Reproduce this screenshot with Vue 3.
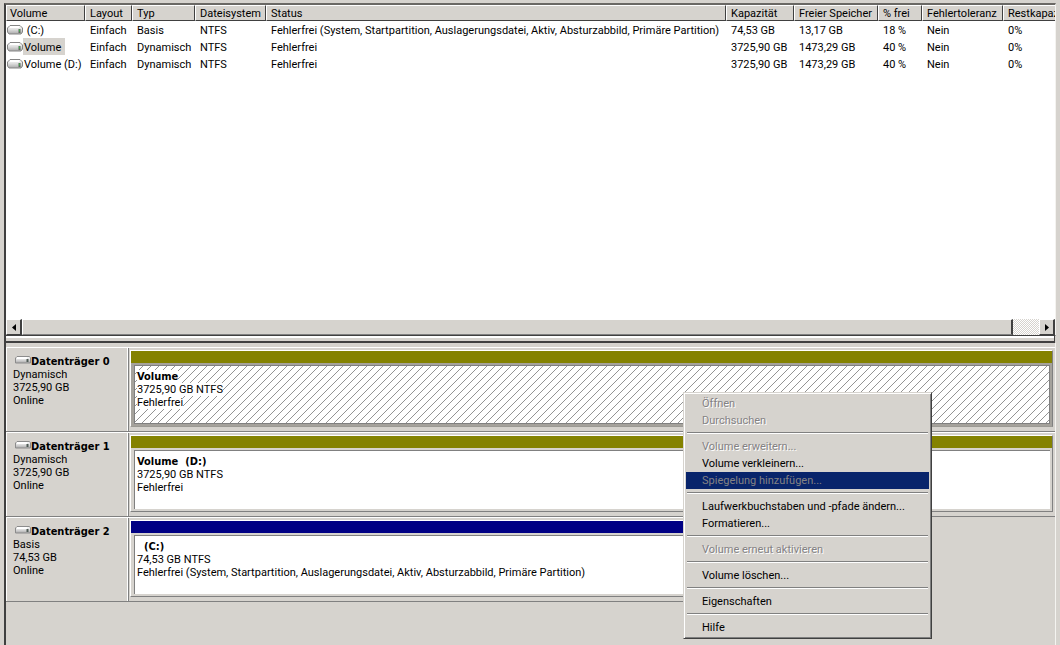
<script setup>
const columns = [
  { label: 'Volume', cls: 'c-volume' },
  { label: 'Layout', cls: 'c-layout' },
  { label: 'Typ', cls: 'c-type' },
  { label: 'Dateisystem', cls: 'c-fs' },
  { label: 'Status', cls: 'c-status' },
  { label: 'Kapazität', cls: 'c-capacity' },
  { label: 'Freier Speicher', cls: 'c-free' },
  { label: '% frei', cls: 'c-percent' },
  { label: 'Fehlertoleranz', cls: 'c-fault' },
  { label: 'Restkapaz', cls: 'c-overhead' },
]

const systemStatus =
  'Fehlerfrei (System, Startpartition, Auslagerungsdatei, Aktiv, Absturzabbild, Primäre Partition)'

const volumes = [
  { name: '\u00a0(C:)', cells: ['Einfach', 'Basis', 'NTFS', systemStatus, '74,53 GB', '13,17 GB', '18 %', 'Nein', '0%'] },
  { name: 'Volume', selected: true, cells: ['Einfach', 'Dynamisch', 'NTFS', 'Fehlerfrei', '3725,90 GB', '1473,29 GB', '40 %', 'Nein', '0%'] },
  { name: 'Volume (D:)', cells: ['Einfach', 'Dynamisch', 'NTFS', 'Fehlerfrei', '3725,90 GB', '1473,29 GB', '40 %', 'Nein', '0%'] },
]

const disks = [
  { name: 'Datenträger 0', kind: 'Dynamisch', size: '3725,90 GB', volume: 'Volume', info: '3725,90 GB NTFS', status: 'Fehlerfrei', band: 'olive', selected: true },
  { name: 'Datenträger 1', kind: 'Dynamisch', size: '3725,90 GB', volume: 'Volume\u00a0 (D:)', info: '3725,90 GB NTFS', status: 'Fehlerfrei', band: 'olive' },
  { name: 'Datenträger 2', kind: 'Basis', size: '74,53 GB', volume: '\u00a0 (C:)', info: '74,53 GB NTFS', status: systemStatus, band: 'navy', partial: true },
]

const menu = [
  [{ label: 'Öffnen', disabled: true }, { label: 'Durchsuchen', disabled: true }],
  [
    { label: 'Volume erweitern...', disabled: true },
    { label: 'Volume verkleinern...' },
    { label: 'Spiegelung hinzufügen...', disabled: true, active: true },
  ],
  [{ label: 'Laufwerkbuchstaben und -pfade ändern...' }, { label: 'Formatieren...' }],
  [{ label: 'Volume erneut aktivieren', disabled: true }],
  [{ label: 'Volume löschen...' }],
  [{ label: 'Eigenschaften' }],
  [{ label: 'Hilfe' }],
]
</script>

<template>
  <main class="console">
    <svg class="defs" width="0" height="0" aria-hidden="true">
      <defs>
        <linearGradient id="drive-body" x1="0" y1="0" x2="0" y2="1">
          <stop offset="0" stop-color="#ffffff" />
          <stop offset="0.5" stop-color="#dcdcdc" />
          <stop offset="1" stop-color="#a8a8a8" />
        </linearGradient>
        <symbol id="drive" viewBox="0 0 16 10">
          <path d="M3 .5h10l2.500 2.500v4L14 9H2L.5 7V3z" fill="url(#drive-body)" stroke="#858585" />
          <path d="M3 2h9" stroke="#fff" stroke-width="2" />
          <path d="M12.500 4v4" stroke="#5c6a5c" stroke-width="2" />
          <path d="M12 5.500h1" stroke="#3fae4a" stroke-width="2" />
        </symbol>
        <symbol id="disk" viewBox="0 0 16 8">
          <path d="M.5 7V2L2 .5h12.500L15.500 2v5z" fill="url(#drive-body)" stroke="#8c8c8c" />
          <path d="M2 2h10" stroke="#fff" stroke-width="2" />
          <path d="M12.500 3v3" stroke="#4e5a55" stroke-width="2" />
        </symbol>
      </defs>
    </svg>

    <section class="list">
      <div class="viewport">
        <table>
          <colgroup>
            <col v-for="c in columns" :key="c.cls" :class="c.cls" />
          </colgroup>
          <thead>
            <tr><th v-for="c in columns" :key="c.cls" scope="col">{{ c.label }}</th></tr>
          </thead>
          <tbody>
            <tr v-for="v in volumes" :key="v.name">
              <td class="name">
                <span class="entry">
                  <svg class="drive" width="16" height="10" aria-hidden="true"><use href="#drive" /></svg>
                  <span class="label" :class="{ selected: v.selected }">{{ v.name }}</span>
                </span>
              </td>
              <td v-for="(cell, i) in v.cells" :key="i">{{ cell }}</td>
            </tr>
          </tbody>
        </table>
      </div>
      <div class="scrollbar">
        <button type="button" class="arrow" aria-label="Nach links">
          <svg width="4" height="7" viewBox="0 0 4 7"><path d="M4 0v7L0 3.500z" /></svg>
        </button>
        <div class="track"><div class="thumb"></div></div>
        <button type="button" class="arrow" aria-label="Nach rechts">
          <svg width="4" height="7" viewBox="0 0 4 7"><path d="M0 0v7l4-3.500z" /></svg>
        </button>
      </div>
    </section>

    <div class="splitter"></div>

    <section class="disks">
      <article v-for="d in disks" :key="d.name" class="disk" :class="{ partial: d.partial }">
        <header class="disk-info">
          <h2><svg width="16" height="8" aria-hidden="true"><use href="#disk" /></svg>{{ d.name }}</h2>
          <p>{{ d.kind }}</p>
          <p>{{ d.size }}</p>
          <p>Online</p>
        </header>
        <div class="extent">
          <div class="region" :class="{ selected: d.selected }">
            <div class="band" :class="d.band"></div>
            <div class="body">
              <svg v-if="d.selected" class="hatch" width="100%" height="100%" aria-hidden="true">
                <defs>
                  <pattern id="hatch" width="8" height="8" patternUnits="userSpaceOnUse">
                    <path d="M0 8L8 0" stroke="#949494" shape-rendering="crispEdges" />
                  </pattern>
                </defs>
                <rect width="100%" height="100%" fill="url(#hatch)" />
              </svg>
              <div class="caption">
                <h3><span>{{ d.volume }}</span></h3>
                <p><span>{{ d.info }}</span></p>
                <p><span>{{ d.status }}</span></p>
              </div>
            </div>
          </div>
        </div>
      </article>
    </section>

    <div class="menu" role="menu">
      <div v-for="(group, g) in menu" :key="g" class="group" role="group">
        <button
          v-for="item in group"
          :key="item.label"
          type="button"
          role="menuitem"
          :disabled="item.disabled"
          :class="{ active: item.active }"
        >{{ item.label }}</button>
      </div>
    </div>
  </main>
</template>

<style>
body {
  background: #d6d3ce;
}
</style>

<style scoped>
* {
  box-sizing: border-box;
}
.console {
  position: relative;
  display: flex;
  flex-direction: column;
  min-height: 100vh;
  padding: 3px 4px 0;
  background: #d6d3ce;
  color: #000;
  font: 11px/13px Tahoma, Roboto, "DejaVu Sans", sans-serif;
  overflow: hidden;
}
.defs {
  position: absolute;
}
h2,
h3,
p {
  margin: 0;
  font-size: inherit;
}
h2,
h3 {
  font-family: Tahoma, "DejaVu Sans Condensed", "DejaVu Sans", sans-serif;
}
button {
  margin: 0;
  padding: 0;
  border: 0;
  background: none;
  color: inherit;
  font: inherit;
}

.list {
  border: solid #404040;
  border-width: 1px 1px 1px 2px;
  border-top: 2px solid #6a6864;
  border-right-color: #f4f3f0;
  background: #fff;
}
.viewport {
  height: 314px;
  overflow: hidden;
}
table {
  width: 100%;
  table-layout: fixed;
  border-collapse: separate;
  border-spacing: 0;
}
.c-volume { width: 79px; }
.c-layout { width: 47px; }
.c-type { width: 63px; }
.c-fs { width: 71px; }
.c-status { width: 460px; }
.c-capacity { width: 68px; }
.c-free { width: 84px; }
.c-percent { width: 44px; }
.c-fault { width: 81px; }
th,
td {
  padding: 2px 0 0 5px;
  height: 17px;
  overflow: hidden;
  text-align: left;
  font-weight: 400;
  white-space: nowrap;
}
th {
  height: 16px;
  padding: 0 0 0 4px;
  border: 1px solid #fff;
  border-right-color: #404040;
  border-bottom-color: #404040;
  background: #d6d3ce;
}
th:first-child {
  padding-left: 3px;
}
th:last-child {
  border-right: 0;
}
td.name {
  padding: 0 0 0 1px;
}
.entry {
  display: flex;
  align-items: center;
}
.drive {
  flex: none;
}
.label {
  height: 17px;
  padding: 2px 4px 0 1px;
  line-height: 15px;
}
.label.selected {
  background: #d6d3ce;
}

.scrollbar {
  display: flex;
  height: 16px;
  background: #d6d3ce;
}
.arrow {
  display: grid;
  place-items: center;
  width: 16px;
  border: 1px solid #fff;
  border-right: 2px solid #404040;
  border-bottom-color: #404040;
}
.track {
  flex: 1;
  padding-right: 26px;
  background: conic-gradient(#fff 25%, #d6d3ce 0 50%, #fff 0 75%, #d6d3ce 0) 0 0 / 2px 2px;
}
.thumb {
  height: 100%;
  border: 1px solid #fff;
  border-right: 2px solid #404040;
  border-bottom-color: #808080;
  background: #d6d3ce;
}

.splitter {
  height: 7px;
  margin-right: 1px;
  border: solid #404040;
  border-width: 0 1px 2px 2px;
  box-shadow: inset 0 2px #fff;
}

.disks {
  flex: 1;
  padding-top: 4px;
  border-left: 2px solid #404040;
  border-right: 1px solid #f4f3f0;
}
.disk {
  display: flex;
  height: 85px;
  border-top: 1px solid #fff;
  border-bottom: 1px solid #808080;
}
.disk.partial {
  width: 80%;
}
.disk-info {
  flex: none;
  width: 122px;
  padding: 7px 0 0 6px;
  border-left: 1px solid #fff;
  border-right: 1px solid #fff;
}
.disk-info h2 svg {
  margin: 0 0 1px 2px;
}
.extent {
  flex: 1;
  padding: 2px 2px 4px 1px;
  border-left: 1px solid #808080;
}
.region {
  display: flex;
  flex-direction: column;
  height: 100%;
  border: 1px solid #fff;
  border-right-color: #808080;
  border-bottom-color: #808080;
}
.band {
  height: 12px;
  background: #848200;
}
.band.navy {
  background: #000084;
}
.body {
  position: relative;
  flex: 1;
  margin: 2px 2px 2px 3px;
  border: solid #808080;
  border-width: 1px 0 0 1px;
  background: #fff;
}
.region.selected {
  border-bottom: 1px solid #9c9a94;
  background: #a5a29c;
}
.region.selected .body {
  border-width: 1px;
}
.hatch {
  position: absolute;
  inset: 0;
}
.caption {
  position: relative;
  padding: 4px 0 0 2px;
}
.selected .caption span {
  background: #fff;
}

.menu {
  position: absolute;
  top: 392px;
  left: 683px;
  width: 249px;
  padding: 2px;
  border: 1px solid #d6d3ce;
  border-right-color: #404040;
  border-bottom-color: #404040;
  background: #d6d3ce;
  box-shadow: inset 1px 1px #fff, inset -1px -1px #808080;
}
.group button {
  display: block;
  width: 100%;
  height: 17px;
  padding: 0 16px;
  text-align: left;
  white-space: nowrap;
}
.group button:disabled {
  color: #848284;
  text-shadow: 1px 1px #fff;
}
.group button.active {
  background: #08246b;
  text-shadow: none;
}
.group + .group::before {
  content: "";
  display: block;
  margin: 3px 1px 4px;
  border-top: 1px solid #808080;
  border-bottom: 1px solid #fff;
}
</style>
